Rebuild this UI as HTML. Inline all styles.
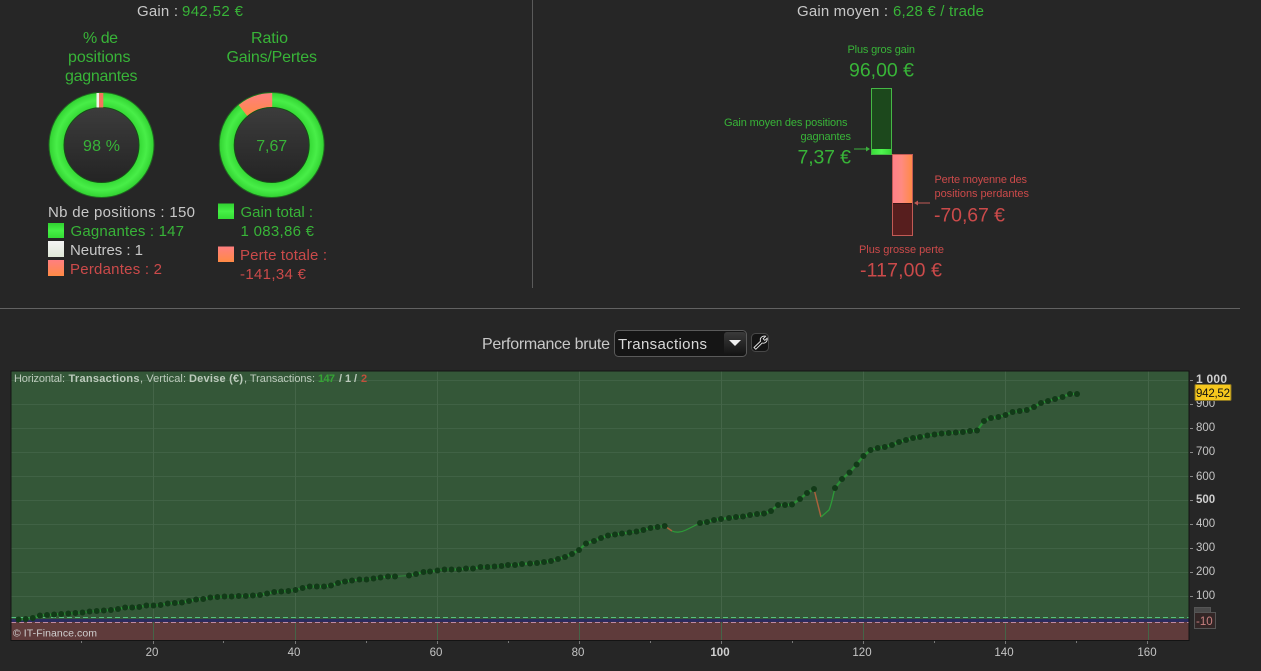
<!DOCTYPE html>
<html><head><meta charset="utf-8"><style>
html,body{margin:0;padding:0;background:#262626;width:1261px;height:671px;overflow:hidden}
svg{display:block}
text{font-family:"Liberation Sans",Arial,sans-serif;white-space:pre}
.g{fill:#38b438}.r{fill:#cb4a4a}.w{fill:#c8c8c8}.a{fill:#c4c4c4;font-size:11.5px}.c{font-size:11px;fill:#bccabc}
</style></head><body>
<svg width="1261" height="671" viewBox="0 0 1261 671" xmlns="http://www.w3.org/2000/svg">
<defs>
<radialGradient id="ring" gradientUnits="userSpaceOnUse" cx="0" cy="0" r="53"><stop offset="0.7" stop-color="#34d834"/><stop offset="0.85" stop-color="#48ee48"/><stop offset="1" stop-color="#30d030"/></radialGradient>
<linearGradient id="hole" x1="0" y1="0" x2="0" y2="1"><stop offset="0" stop-color="#3c3c3c"/><stop offset="1" stop-color="#242424"/></linearGradient>
<linearGradient id="sg" x1="0" y1="0" x2="0" y2="1"><stop offset="0" stop-color="#30d030"/><stop offset=".5" stop-color="#46f046"/><stop offset="1" stop-color="#34dc34"/></linearGradient>
<linearGradient id="sr" x1="0" y1="0" x2="0" y2="1"><stop offset="0" stop-color="#ff7f80"/><stop offset="1" stop-color="#ff8a45"/></linearGradient>
<linearGradient id="sw" x1="0" y1="0" x2="0" y2="1"><stop offset="0" stop-color="#f4f4f4"/><stop offset="1" stop-color="#dfe8d8"/></linearGradient>
<linearGradient id="br" x1="0" y1="0" x2="1" y2="0"><stop offset="0" stop-color="#ff8088"/><stop offset=".45" stop-color="#ff8a80"/><stop offset="1" stop-color="#ff8a48"/></linearGradient>
<linearGradient id="bg" x1="0" y1="0" x2="1" y2="0"><stop offset="0" stop-color="#3add3a"/><stop offset=".5" stop-color="#50f550"/><stop offset="1" stop-color="#36d836"/></linearGradient>
<linearGradient id="sel" x1="0" y1="0" x2="0" y2="1"><stop offset="0" stop-color="#3a3a3a"/><stop offset="1" stop-color="#141414"/></linearGradient>
</defs>
<rect width="1261" height="671" fill="#262626"/>

<text x="137" y="16" font-size="15" class="w" textLength="41">Gain :</text>
<text x="182" y="16" font-size="15" class="g" textLength="61">942,52 €</text>

<g font-size="16" class="g">
<text x="83" y="43" class="g" textLength="35">% de</text>
<text x="68" y="62" class="g" textLength="62.5">positions</text>
<text x="65" y="81" class="g" textLength="72.5">gagnantes</text>
<text x="251" y="43" class="g" textLength="37">Ratio</text>
<text x="226.5" y="62" class="g" textLength="90.5">Gains/Pertes</text>
</g>

<g transform="translate(101.5 145)">
<circle r="45" fill="none" stroke="url(#ring)" stroke-width="15"/>
<circle r="52.5" fill="none" stroke="#1f6a1f" stroke-width="1"/>
<circle r="37.5" fill="url(#hole)" stroke="#174f17" stroke-width="1"/>
<rect x="-5" y="-52" width="2.6" height="14.5" fill="#f2f2ea"/>
<rect x="-2.4" y="-52" width="4.2" height="14.5" fill="#f5735c"/>
<text x="-18.5" y="6" font-size="16" class="g" textLength="37">98 %</text>
</g>
<g transform="translate(271.7 145)">
<circle r="45" fill="none" stroke="url(#ring)" stroke-width="15"/>
<path d="M0.5 -52 A52 52 0 0 0 -33 -40 L-24.5 -29 A38 38 0 0 1 0.5 -38 Z" fill="url(#sr)"/>
<circle r="52.5" fill="none" stroke="#1f6a1f" stroke-width="1"/>
<circle r="37.5" fill="url(#hole)" stroke="#174f17" stroke-width="1"/>
<text x="-15.5" y="6" font-size="16" class="g" textLength="31">7,67</text>
</g>

<text x="48" y="217" font-size="15" class="w" textLength="147">Nb de positions : 150</text>
<rect x="48" y="223" width="16" height="15" fill="url(#sg)"/>
<text x="70.5" y="236" font-size="15" class="g" textLength="113.5">Gagnantes : 147</text>
<rect x="48" y="241" width="16" height="16" fill="url(#sw)"/>
<text x="70" y="255" font-size="15" class="w" textLength="73">Neutres : 1</text>
<rect x="48" y="260" width="16" height="16" fill="url(#sr)"/>
<text x="70" y="274" font-size="15" class="r" textLength="92">Perdantes : 2</text>

<rect x="218" y="203.5" width="16" height="15.5" fill="url(#sg)"/>
<text x="240.5" y="217" font-size="15" class="g" textLength="72.5">Gain total :</text>
<text x="240.5" y="236" font-size="15" class="g" textLength="73.5">1 083,86 €</text>
<rect x="218" y="246.5" width="16" height="15.5" fill="url(#sr)"/>
<text x="240" y="260" font-size="15" class="r" textLength="87">Perte totale :</text>
<text x="240" y="279" font-size="15" class="r" textLength="66">-141,34 €</text>

<rect x="532" y="0" width="1" height="288" fill="#5a5a5a"/>
<rect x="0" y="308" width="1240" height="1" fill="#626262"/>

<text x="797" y="16" font-size="15" class="w" textLength="91">Gain moyen :</text>
<text x="893" y="16" font-size="15" class="g" textLength="91">6,28 € / trade</text>

<text x="847.5" y="53" font-size="11" class="g" textLength="67.5">Plus gros gain</text>
<text x="849" y="76.5" font-size="19.5" class="g" textLength="65">96,00 €</text>
<text x="724" y="126" font-size="11" class="g" textLength="123.5">Gain moyen des positions</text>
<text x="800.5" y="140" font-size="11" class="g" textLength="50.5">gagnantes</text>
<text x="797.5" y="163.5" font-size="19.5" class="g" textLength="53.5">7,37 €</text>

<rect x="871.5" y="88.5" width="20" height="66" fill="#1c481c" stroke="#45b845"/>
<rect x="872" y="149" width="19" height="5" fill="url(#bg)"/>
<path d="M854 149 H869" stroke="#3cb03c" stroke-width="1" fill="none"/><path d="M870 149 L866 146.5 V151.5 Z" fill="#3cb03c"/>

<rect x="892.5" y="154.5" width="20" height="81" fill="#571e1e" stroke="#c25a55"/>
<rect x="893" y="155" width="19" height="48" fill="url(#br)"/>
<rect x="893" y="203" width="19" height="1" fill="#3a1515"/>
<path d="M916 203 H930" stroke="#c25a55" stroke-width="1" fill="none"/><path d="M914 203 L918 200.5 V205.5 Z" fill="#c25a55"/>

<text x="934.5" y="183" font-size="11" class="r" textLength="92.5">Perte moyenne des</text>
<text x="934.5" y="197" font-size="11" class="r" textLength="94.5">positions perdantes</text>
<text x="934" y="221.5" font-size="19.5" class="r" textLength="71">-70,67 €</text>
<text x="859" y="253" font-size="11" class="r" textLength="85">Plus grosse perte</text>
<text x="860" y="276.5" font-size="19.5" class="r" textLength="82">-117,00 €</text>

<text x="482" y="349" font-size="16" class="w" textLength="128">Performance brute</text>
<rect x="614.5" y="330.5" width="132" height="26" rx="4" fill="#151515" stroke="#5a5a5a"/>
<text x="618" y="349" font-size="15" fill="#d8d8d8" textLength="89">Transactions</text>
<rect x="724" y="332" width="22" height="23" rx="3" fill="url(#sel)"/>
<path d="M729 340 H741 L735 346 Z" fill="#f2f2f2"/>
<rect x="751.5" y="333.5" width="17" height="18" rx="4" fill="#141414" stroke="#484848"/>
<path d="M754 347.5 L760.5 341.2 C759.6 338.2 761.8 335.6 765.6 336.2 L763.2 338.8 L764.8 340.4 L767.2 338.2 C767.6 341.6 765 343.8 762.2 343 L755.8 349.3 Z" fill="none" stroke="#e8e8e8" stroke-width="0.9"/>

<!-- chart -->
<rect x="11" y="371" width="1178" height="249" fill="#345738"/>
<rect x="11" y="620" width="1178" height="20" fill="#5f3b3b"/>
<path d="M11 380.5H1189M11 404.5H1189M11 428.5H1189M11 452.5H1189M11 476.5H1189M11 500.5H1189M11 524.5H1189M11 548.5H1189M11 572.5H1189M11 596.5H1189" stroke="#406245" stroke-width="1" fill="none"/>
<path d="M153.5 371V640M295.5 371V640M437.5 371V640M579.5 371V640M721.5 371V640M863.5 371V640M1005.5 371V640M1148.5 371V640" stroke="#446548" stroke-width="1" fill="none"/>
<rect x="11" y="619" width="1178" height="3" fill="#2b2b5e"/>
<path d="M11 617.5H1189" stroke="#55c080" stroke-width="1" stroke-dasharray="5 3" fill="none"/>
<path d="M11 622.5H1189" stroke="#c08aa0" stroke-width="1" stroke-dasharray="5 3" fill="none"/>
<rect x="11" y="371" width="1178" height="269.5" fill="none" stroke="#141414" stroke-width="1"/>

<polyline fill="none" stroke="#2b8f36" stroke-width="2.2" points="18.6,619.5 25.7,619 32.8,618 39.9,615.5 47,615 54.1,614.5 61.2,614 68.3,613.5 75.4,613 82.5,612.5 89.6,611.5 96.7,611 103.8,610.5 110.9,610 118,609 125.1,607.5 132.2,607.5 139.3,607 146.4,605.5 153.5,605.5 160.6,605 167.7,603.5 174.8,603 181.9,602.5 189,601 196.1,599.5 203.2,599 210.3,597.5 217.4,597 224.5,596.5 231.6,596.5 238.7,596 245.8,596 252.9,595.5 260,595 267.1,593.5 274.2,592 281.3,591.5 288.4,591 295.5,590 302.6,588 309.7,586.5 316.8,586.5 324,586.5 331,585.5 338,583 345,581.5 352,580.5 359.5,579.5 366.5,579.5 373.5,578.5 380.5,577.5 388,576.5 395,576.5"/>
<polyline fill="none" stroke="#2b8f36" stroke-width="2.2" points="409,575.5 416,574 423.5,572 430,571.5 437.5,570.5 444.5,569.5 451.5,569.5 459,569.5 466,568.5 473,568.5 480.5,567 487.5,567 494.5,566.5 501.5,566 508,565 515,565 522,564 530,563.5 537,563 544,562 551,561 558,559 565,557 572,554 579,550 586,543.5 594,541 601,538 608,535.5 615,534.5 622,533.5 629.5,532.5 636.5,531.5 643.4,530 650.5,528 657.6,527 664.7,526"/>
<path d="M395 576.5 L409 575.5" stroke="#2d8a38" stroke-width="1" fill="none"/>
<path d="M664.7 526 L672 531" stroke="#a8613c" stroke-width="1.5" fill="none"/>
<path d="M672 531 C676 533 682 532 686 530 L700 523" stroke="#2d9a38" stroke-width="1.2" fill="none"/>
<polyline fill="none" stroke="#2b8f36" stroke-width="2.2" points="700,523 707,522 714,520 721,519 729,518 736,517 743,516.5 750,515 757,514 764,513.5 771,511 778,505 785,505 792,504.5 800,499 807,493 814,489"/>
<path d="M814 489 L821 517" stroke="#a8613c" stroke-width="1.5" fill="none"/>
<path d="M821 517 L829 510 C832 503 833 495 835 488" stroke="#2d9a38" stroke-width="1.3" fill="none"/>
<polyline fill="none" stroke="#2b8f36" stroke-width="2.2" points="835,488 842,479 849.5,472.5 856.6,464.5 863.5,456 870.6,450 877.7,448 884.8,447 892,445 899,442 906,440 913,438 920,437 927.4,435.5 934.5,434.5 941.6,433.5 948.7,433 955.8,432.5 962.9,432 970,431 977,430.5 984,421 991,418 998.4,417 1005.5,415 1012.6,412 1019.7,411 1026.8,410 1034,407 1041,403 1048,401 1055,399 1062.5,397 1070,394 1077,394"/>
<g fill="#123a18">
<circle cx="18.6" cy="619.5" r="3"/><circle cx="25.7" cy="619" r="3"/><circle cx="32.8" cy="618" r="3"/><circle cx="39.9" cy="615.5" r="3"/><circle cx="47" cy="615" r="3"/><circle cx="54.1" cy="614.5" r="3"/><circle cx="61.2" cy="614" r="3"/><circle cx="68.3" cy="613.5" r="3"/><circle cx="75.4" cy="613" r="3"/><circle cx="82.5" cy="612.5" r="3"/><circle cx="89.6" cy="611.5" r="3"/><circle cx="96.7" cy="611" r="3"/><circle cx="103.8" cy="610.5" r="3"/><circle cx="110.9" cy="610" r="3"/><circle cx="118" cy="609" r="3"/><circle cx="125.1" cy="607.5" r="3"/><circle cx="132.2" cy="607.5" r="3"/><circle cx="139.3" cy="607" r="3"/><circle cx="146.4" cy="605.5" r="3"/><circle cx="153.5" cy="605.5" r="3"/><circle cx="160.6" cy="605" r="3"/><circle cx="167.7" cy="603.5" r="3"/><circle cx="174.8" cy="603" r="3"/><circle cx="181.9" cy="602.5" r="3"/><circle cx="189" cy="601" r="3"/><circle cx="196.1" cy="599.5" r="3"/><circle cx="203.2" cy="599" r="3"/><circle cx="210.3" cy="597.5" r="3"/><circle cx="217.4" cy="597" r="3"/><circle cx="224.5" cy="596.5" r="3"/><circle cx="231.6" cy="596.5" r="3"/><circle cx="238.7" cy="596" r="3"/><circle cx="245.8" cy="596" r="3"/><circle cx="252.9" cy="595.5" r="3"/><circle cx="260" cy="595" r="3"/><circle cx="267.1" cy="593.5" r="3"/><circle cx="274.2" cy="592" r="3"/><circle cx="281.3" cy="591.5" r="3"/><circle cx="288.4" cy="591" r="3"/><circle cx="295.5" cy="590" r="3"/><circle cx="302.6" cy="588" r="3"/><circle cx="309.7" cy="586.5" r="3"/><circle cx="316.8" cy="586.5" r="3"/><circle cx="324" cy="586.5" r="3"/><circle cx="331" cy="585.5" r="3"/><circle cx="338" cy="583" r="3"/><circle cx="345" cy="581.5" r="3"/><circle cx="352" cy="580.5" r="3"/><circle cx="359.5" cy="579.5" r="3"/><circle cx="366.5" cy="579.5" r="3"/><circle cx="373.5" cy="578.5" r="3"/><circle cx="380.5" cy="577.5" r="3"/><circle cx="388" cy="576.5" r="3"/><circle cx="395" cy="576.5" r="3"/>
<circle cx="409" cy="575.5" r="3"/><circle cx="416" cy="574" r="3"/><circle cx="423.5" cy="572" r="3"/><circle cx="430" cy="571.5" r="3"/><circle cx="437.5" cy="570.5" r="3"/><circle cx="444.5" cy="569.5" r="3"/><circle cx="451.5" cy="569.5" r="3"/><circle cx="459" cy="569.5" r="3"/><circle cx="466" cy="568.5" r="3"/><circle cx="473" cy="568.5" r="3"/><circle cx="480.5" cy="567" r="3"/><circle cx="487.5" cy="567" r="3"/><circle cx="494.5" cy="566.5" r="3"/><circle cx="501.5" cy="566" r="3"/><circle cx="508" cy="565" r="3"/><circle cx="515" cy="565" r="3"/><circle cx="522" cy="564" r="3"/><circle cx="530" cy="563.5" r="3"/><circle cx="537" cy="563" r="3"/><circle cx="544" cy="562" r="3"/><circle cx="551" cy="561" r="3"/><circle cx="558" cy="559" r="3"/><circle cx="565" cy="557" r="3"/><circle cx="572" cy="554" r="3"/><circle cx="579" cy="550" r="3"/><circle cx="586" cy="543.5" r="3"/><circle cx="594" cy="541" r="3"/><circle cx="601" cy="538" r="3"/><circle cx="608" cy="535.5" r="3"/><circle cx="615" cy="534.5" r="3"/><circle cx="622" cy="533.5" r="3"/><circle cx="629.5" cy="532.5" r="3"/><circle cx="636.5" cy="531.5" r="3"/><circle cx="643.4" cy="530" r="3"/><circle cx="650.5" cy="528" r="3"/><circle cx="657.6" cy="527" r="3"/><circle cx="664.7" cy="526" r="3"/>
<circle cx="700" cy="523" r="3"/><circle cx="707" cy="522" r="3"/><circle cx="714" cy="520" r="3"/><circle cx="721" cy="519" r="3"/><circle cx="729" cy="518" r="3"/><circle cx="736" cy="517" r="3"/><circle cx="743" cy="516.5" r="3"/><circle cx="750" cy="515" r="3"/><circle cx="757" cy="514" r="3"/><circle cx="764" cy="513.5" r="3"/><circle cx="771" cy="511" r="3"/><circle cx="778" cy="505" r="3"/><circle cx="785" cy="505" r="3"/><circle cx="792" cy="504.5" r="3"/><circle cx="800" cy="499" r="3"/><circle cx="807" cy="493" r="3"/><circle cx="814" cy="489" r="3"/>
<circle cx="835" cy="488" r="3"/><circle cx="842" cy="479" r="3"/><circle cx="849.5" cy="472.5" r="3"/><circle cx="856.6" cy="464.5" r="3"/><circle cx="863.5" cy="456" r="3"/><circle cx="870.6" cy="450" r="3"/><circle cx="877.7" cy="448" r="3"/><circle cx="884.8" cy="447" r="3"/><circle cx="892" cy="445" r="3"/><circle cx="899" cy="442" r="3"/><circle cx="906" cy="440" r="3"/><circle cx="913" cy="438" r="3"/><circle cx="920" cy="437" r="3"/><circle cx="927.4" cy="435.5" r="3"/><circle cx="934.5" cy="434.5" r="3"/><circle cx="941.6" cy="433.5" r="3"/><circle cx="948.7" cy="433" r="3"/><circle cx="955.8" cy="432.5" r="3"/><circle cx="962.9" cy="432" r="3"/><circle cx="970" cy="431" r="3"/><circle cx="977" cy="430.5" r="3"/><circle cx="984" cy="421" r="3"/><circle cx="991" cy="418" r="3"/><circle cx="998.4" cy="417" r="3"/><circle cx="1005.5" cy="415" r="3"/><circle cx="1012.6" cy="412" r="3"/><circle cx="1019.7" cy="411" r="3"/><circle cx="1026.8" cy="410" r="3"/><circle cx="1034" cy="407" r="3"/><circle cx="1041" cy="403" r="3"/><circle cx="1048" cy="401" r="3"/><circle cx="1055" cy="399" r="3"/><circle cx="1062.5" cy="397" r="3"/><circle cx="1070" cy="394" r="3"/><circle cx="1077" cy="394" r="3"/>
</g>

<text x="14" y="382" class="c" textLength="51">Horizontal:</text>
<text x="68.5" y="382" class="c" font-weight="bold" textLength="71">Transactions</text>
<text x="140" y="382" class="c" textLength="46">, Vertical:</text>
<text x="189" y="382" class="c" font-weight="bold" textLength="54">Devise (€)</text>
<text x="244" y="382" class="c" textLength="71">, Transactions:</text>
<text x="318" y="382" font-size="11" font-weight="bold" fill="#35a435" textLength="17">147</text>
<text x="339" y="382" class="c" font-weight="bold">/</text>
<text x="345" y="382" class="c" font-weight="bold">1</text>
<text x="354" y="382" class="c" font-weight="bold">/</text>
<text x="361" y="382" font-size="11" font-weight="bold" fill="#c0503c">2</text>
<text x="13" y="636.5" font-size="10.5" fill="#cfcfcf" textLength="84">© IT-Finance.com</text>

<!-- axes -->
<path d="M1190 380.5h3M1190 404.5h3M1190 428.5h3M1190 452.5h3M1190 476.5h3M1190 500.5h3M1190 524.5h3M1190 548.5h3M1190 572.5h3M1190 596.5h3" stroke="#888" fill="none"/>
<path d="M81.5 641v2M153.5 641v3M223.5 641v2M295.5 641v3M366.5 641v2M437.5 641v3M508.5 641v2M579.5 641v3M650.5 641v2M721.5 641v3M792.5 641v2M863.5 641v3M934.5 641v2M1005.5 641v3M1076.5 641v2M1147.5 641v3" stroke="#777" fill="none"/>
<text x="1196" y="383" font-size="12" font-weight="bold" fill="#cfcfcf" textLength="31">1 000</text>
<text x="1196" y="407" class="a">900</text>
<text x="1196" y="431" class="a">800</text>
<text x="1196" y="455" class="a">700</text>
<text x="1196" y="480" class="a">600</text>
<text x="1196" y="503" font-size="11.5" font-weight="bold" fill="#cfcfcf">500</text>
<text x="1196" y="527" class="a">400</text>
<text x="1196" y="551" class="a">300</text>
<text x="1196" y="575" class="a">200</text>
<text x="1196" y="599" class="a">100</text>
<rect x="1195" y="384.5" width="36" height="16" rx="1" fill="#f6c81e" stroke="#8a7420" stroke-width="1"/>
<text x="1196" y="397" font-size="11.5" fill="#111" textLength="34">942,52</text>
<rect x="1194.5" y="607.5" width="16" height="6" fill="#4a4a4a" stroke="#555"/>
<rect x="1194.5" y="612.5" width="21" height="16" fill="#332626" stroke="#555"/>
<text x="1196" y="625" font-size="11.5" fill="#c88080">-10</text>

<g text-anchor="middle">
<text x="152" y="656" class="a">20</text>
<text x="294" y="656" class="a">40</text>
<text x="436" y="656" class="a">60</text>
<text x="578" y="656" class="a">80</text>
<text x="720" y="656" font-size="11.5" font-weight="bold" fill="#cfcfcf">100</text>
<text x="862" y="656" class="a">120</text>
<text x="1004" y="656" class="a">140</text>
<text x="1147" y="656" class="a">160</text>
</g>
</svg>
</body></html>
